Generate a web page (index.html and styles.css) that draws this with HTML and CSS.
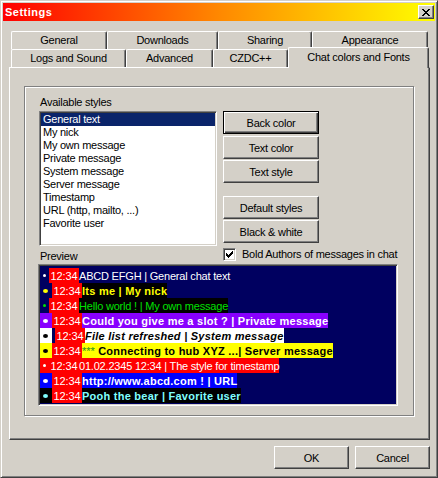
FILE: index.html
```html
<!DOCTYPE html>
<html>
<head>
<meta charset="utf-8">
<title>Settings</title>
<link rel="stylesheet" href="styles.css">
</head>
<body>
<div class="window">
  <div class="titlebar">
    <span class="title">Settings</span>
    <span class="close"><svg width="8" height="7" viewBox="0 0 8 7" shape-rendering="crispEdges"><path fill="#000" d="M0 0h2v1h-2zM6 0h2v1h-2zM1 1h2v1h-2zM5 1h2v1h-2zM2 2h4v1h-4zM3 3h2v1h-2zM2 4h4v1h-4zM1 5h2v1h-2zM5 5h2v1h-2zM0 6h2v1h-2zM6 6h2v1h-2z"/></svg></span>
  </div>
  <div class="body">
    <div class="tabs">
      <div class="tabrow back">
        <div class="tab t-general">General</div>
        <div class="tab t-downloads">Downloads</div>
        <div class="tab t-sharing">Sharing</div>
        <div class="tab t-appearance">Appearance</div>
      </div>
      <div class="tabrow front">
        <div class="tab t-logs">Logs and Sound</div>
        <div class="tab t-advanced">Advanced</div>
        <div class="tab t-czdc">CZDC++</div>
        <div class="tab sel t-chat">Chat colors and Fonts</div>
      </div>
    </div>
    <div class="panel">
      <div class="group">
        <div class="toprow">
          <div class="leftcol">
            <div class="label">Available styles</div>
            <div class="listbox">
              <div class="item selected">General text</div>
              <div class="item">My nick</div>
              <div class="item">My own message</div>
              <div class="item">Private message</div>
              <div class="item">System message</div>
              <div class="item">Server message</div>
              <div class="item">Timestamp</div>
              <div class="item">URL (http, mailto, ...)</div>
              <div class="item">Favorite user</div>
            </div>
            <div class="label preview-label">Preview</div>
          </div>
          <div class="rightcol">
            <button class="btn side default b1">Back color</button>
            <button class="btn side b2">Text color</button>
            <button class="btn side b3">Text style</button>
            <button class="btn side b4">Default styles</button>
            <button class="btn side">Black &amp; white</button>
            <div class="check">
              <span class="cbox"><svg width="7" height="7" viewBox="0 0 7 7" shape-rendering="crispEdges"><path fill="#000" d="M6 0h1v3h-1zM5 1h1v3h-1zM4 2h1v3h-1zM0 2h1v3h-1zM1 3h1v3h-1zM2 4h1v3h-1zM3 3h1v3h-1z"/></svg></span>
              <span class="ctext">Bold Authors of messages in chat</span>
            </div>
          </div>
        </div>
        <div class="preview">
          <div class="line s-general"><span class="bul sm"><i class="dot"></i></span><span class="ts">12:34</span><span class="txt">ABCD EFGH | General chat text</span></div>
          <div class="line s-nick"><span class="bul"><i class="dot"></i></span><span class="ts">12:34</span><span class="txt b">Its me | My nick</span></div>
          <div class="line s-own"><span class="bul sm"><i class="dot"></i></span><span class="ts">12:34</span><span class="txt">Hello world ! | My own message</span></div>
          <div class="line s-private"><span class="bul"><i class="dot"></i></span><span class="ts">12:34</span><span class="txt b">Could you give me a slot ? | Private message</span></div>
          <div class="line s-system"><span class="bul"><i class="dot"></i></span><span class="ts">12:34</span><span class="txt b it">File list refreshed | System message</span></div>
          <div class="line s-server"><span class="bul"><i class="dot"></i></span><span class="ts">12:34</span><span class="txt b"><span class="stars">***</span> Connecting to hub XYZ ...| Server message</span></div>
          <div class="line s-time"><span class="bul sm"><i class="dot"></i></span><span class="ts">12:34</span><span class="txt">01.02.2345 12:34 | The style for timestamp</span></div>
          <div class="line s-url"><span class="bul"><i class="dot"></i></span><span class="ts">12:34</span><span class="txt b">http://www.abcd.com ! | URL</span></div>
          <div class="line s-fav"><span class="bul"><i class="dot"></i></span><span class="ts">12:34</span><span class="txt b">Pooh the bear | Favorite user</span></div>
        </div>
      </div>
    </div>
  </div>
  <div class="footer">
    <button class="btn foot">OK</button>
    <button class="btn foot">Cancel</button>
  </div>
</div>
</body>
</html>
```
FILE: styles.css
```css
* { box-sizing: border-box; }
html, body { margin: 0; padding: 0; }
body {
  width: 438px;
  height: 478px;
  overflow: hidden;
  background: #d4d0c8;
  font-family: "Liberation Sans", Arial, sans-serif;
  font-size: 11px;
  color: #000;
}
.window {
  width: 438px;
  height: 478px;
  background: #d4d0c8;
  border: 1px solid;
  border-color: #d4d0c8 #404040 #404040 #d4d0c8;
  box-shadow: inset 1px 1px #fff, inset -1px -1px #808080;
  padding: 2px;
}
.titlebar {
  height: 18px;
  background: linear-gradient(to right, #ff0000, #ff8800 50%, #ffff00);
  display: flex;
  justify-content: space-between;
  align-items: flex-start;
}
.title {
  color: #fff;
  font-weight: bold;
  font-size: 11px;
  letter-spacing: 0.5px;
  line-height: 18px;
  padding-left: 2px;
}
.close {
  width: 16px;
  height: 14px;
  margin: 2px 1px 0 0;
  background: #d4d0c8;
  border: 1px solid;
  border-color: #fff #404040 #404040 #fff;
  box-shadow: inset -1px -1px #808080;
  display: flex;
  align-items: center;
  justify-content: center;
}
.close svg { display: block; }

.body { padding-left: 6px; }
.tabs { margin-top: 10px; padding-left: 2px; }
.tabrow { display: flex; }
.tabrow.back { margin-bottom: -2px; }
.tabrow.front { height: 20px; align-items: flex-end; }
.tab {
  height: 18px;
  background: #d4d0c8;
  border-top: 1px solid #fff;
  border-left: 1px solid #fff;
  border-right: 1px solid #404040;
  box-shadow: inset -1px 0 #808080;
  border-radius: 2px 2px 0 0;
  text-align: center;
  line-height: 17px;
  letter-spacing: -0.25px;
  white-space: nowrap;
}
.tab.sel {
  height: 21px;
  margin-bottom: -1px;
  line-height: 18px;
  position: relative;
  z-index: 1;
}
.t-general { width: 96px; }
.t-downloads { width: 111px; }
.t-sharing { width: 94px; }
.t-appearance { width: 116px; }
.t-logs { width: 115px; }
.t-advanced { width: 87px; }
.t-czdc { width: 75px; }
.t-chat { width: 141px; }

.panel {
  width: 421px;
  height: 373px;
  border: 1px solid;
  border-color: #fff #404040 #404040 #fff;
  box-shadow: inset -1px -1px #808080;
  padding: 18px 0 0 14px;
}
.group {
  width: 390px;
  height: 330px;
  border: 1px solid #808080;
  box-shadow: 1px 1px 0 #fff, inset 1px 1px 0 #fff;
  padding: 9px 0 0 14px;
}
.toprow { display: flex; gap: 6px; }
.leftcol { width: 178px; }
.label {
  height: 13px;
  line-height: 13px;
  letter-spacing: -0.25px;
  padding-left: 1px;
  white-space: nowrap;
}
.listbox {
  margin-top: 2px;
  width: 178px;
  height: 135px;
  background: #fff;
  border: 1px solid;
  border-color: #808080 #fff #fff #808080;
  box-shadow: inset 1px 1px #404040, inset -1px -1px #d4d0c8;
  padding: 1px;
}
.item {
  height: 13px;
  line-height: 13px;
  padding-left: 2px;
  letter-spacing: -0.25px;
  white-space: nowrap;
}
.item.selected { background: #0a246a; color: #fff; }
.preview-label { margin-top: 4px; }

.rightcol {
  padding-top: 15px;
  display: flex;
  flex-direction: column;
}
.btn {
  font-family: "Liberation Sans", Arial, sans-serif;
  font-size: 11px;
  letter-spacing: -0.25px;
  color: #000;
  background: #d4d0c8;
  border: 1px solid;
  border-color: #fff #404040 #404040 #fff;
  box-shadow: inset -1px -1px #808080;
  padding: 0;
  margin: 0;
  height: 23px;
  white-space: nowrap;
}
.btn.side { width: 96px; }
.btn.default {
  border-color: #000;
  box-shadow: inset 1px 1px #fff, inset -1px -1px #404040, inset -2px -2px #808080;
}
.b1 { margin-bottom: 2px; }
.b2 { margin-bottom: 1px; }
.b3 { margin-bottom: 13px; }
.b4 { margin-bottom: 1px; }
.check {
  margin-top: 5px;
  display: flex;
  gap: 6px;
  height: 13px;
  line-height: 13px;
  white-space: nowrap;
}
.cbox {
  width: 13px;
  height: 13px;
  background: #fff;
  border: 1px solid;
  border-color: #808080 #fff #fff #808080;
  box-shadow: inset 1px 1px #404040, inset -1px -1px #d4d0c8;
  display: flex;
  align-items: center;
  justify-content: center;
}
.cbox svg { display: block; }
.ctext { letter-spacing: -0.25px; }

.preview {
  margin-top: 1px;
  margin-left: -1px;
  width: 360px;
  height: 142px;
  background: #000060;
  border: 1px solid;
  border-color: #808080 #fff #fff #808080;
  box-shadow: inset 1px 1px #404040, inset -1px -1px #d4d0c8;
  padding: 3px 1px 1px 1px;
}
.line {
  display: flex;
  height: 15px;
  white-space: nowrap;
}
.line > span { height: 15px; line-height: 17px; }
.bul {
  width: 12px;
  display: flex;
  align-items: center;
  padding-left: 3px;
}
.bul.sm { width: 9px; }
.dot {
  display: block;
  width: 5px;
  height: 4px;
  border-radius: 50%;
  background: #fff;
}
.bul.sm .dot { width: 3px; height: 3px; }
.ts {
  width: 30px;
  background: #ff0000;
  color: #fff;
  text-align: center;
  letter-spacing: -0.1px;
}
.txt { letter-spacing: -0.2px; color: #fff; }
.txt.b { font-weight: bold; letter-spacing: 0.25px; }
.txt.it { font-style: italic; }
.stars { color: #209020; font-weight: normal; letter-spacing: 0; }

.s-general .dot { background: #fff; }
.s-nick .dot { background: #ffff00; }
.s-nick .txt { background: #000; color: #ffff00; }
.s-own .dot { background: #00e000; }
.s-own .txt { background: #000; color: #00e000; }
.s-private .bul, .s-private .txt { background: #8800ff; }
.s-system .bul { background: #fff; margin-right: 3px; }
.s-system .dot { background: #000; }
.s-system .txt { background: #fff; color: #000; }
.s-server .bul, .s-server .txt { background: #ffff00; }
.s-server .dot { background: #000; }
.s-server .txt { color: #000; }
.s-time .bul, .s-time .txt { background: #ff0000; }
.s-url .bul, .s-url .txt { background: #0000ff; }
.s-fav .bul, .s-fav .txt { background: #000; }
.s-fav .dot { background: #80ffff; }
.s-fav .txt { color: #80ffff; }

.footer {
  display: flex;
  justify-content: flex-end;
  gap: 6px;
  margin-top: 6px;
  padding-right: 5px;
}
.btn.foot { width: 75px; }
```
